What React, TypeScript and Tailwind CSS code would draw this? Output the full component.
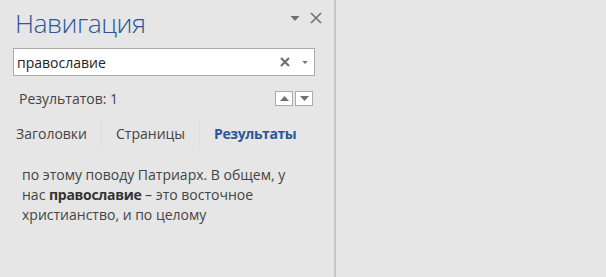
import React from "react";

const font = { fontFamily: '"Open Sans", "Noto Sans", sans-serif' };

function Triangle({ up = false, className = "" }: { up?: boolean; className?: string }) {
  return (
    <svg width="9" height="5" viewBox="0 0 9 5" className={className}>
      <path d={up ? "M0 5 L4.5 0 L9 5 Z" : "M0 0 L9 0 L4.5 5 Z"} fill="currentColor" />
    </svg>
  );
}

export default function App() {
  return (
    <div
      className="flex h-[277px] w-[606px] bg-[#e6e6e6] text-[#444444]"
      style={font}
    >
      <div className="flex w-[336px] shrink-0 flex-col border-r-2 border-[#c6c6c6]">
        {/* Header */}
        <div className="flex h-[48px] items-start justify-between pl-[15px] pr-[12px]">
          <h1 className="pt-[5px] text-[26.5px] font-light leading-[36px] tracking-[-0.5px] text-[#2b579a]">
            Навигация
          </h1>
          <div className="flex items-center gap-[10px] pt-[12px] text-[#707070]">
            <Triangle className="h-[5px] w-[10px]" />
            <svg width="12" height="12" viewBox="0 0 12 12">
              <path d="M1 1 L11 11 M11 1 L1 11" stroke="currentColor" strokeWidth="1.6" />
            </svg>
          </div>
        </div>

        {/* Search */}
        <div className="mx-[13px] flex h-[28px] w-[302px] items-center border border-[#ababab] bg-white pl-[3px] pr-[6px]">
          <span className="flex-1 text-[14px] text-[#222222]">православие</span>
          <svg width="10" height="10" viewBox="0 0 10 10" className="mr-[12px] text-[#707070]">
            <path d="M1 1 L9 9 M9 1 L1 9" stroke="currentColor" strokeWidth="2.2" />
          </svg>
          <Triangle className="h-[3px] w-[6px] text-[#707070]" />
        </div>

        {/* Results count */}
        <div className="mt-[13px] flex h-[18px] items-center justify-between pl-[19px] pr-[21px]">
          <span className="text-[14px] text-[#444444]">Результатов: 1</span>
          <div className="flex gap-[2px]">
            <button className="flex h-[15px] w-[18px] items-center justify-center border border-[#ababab] bg-white text-[#707070]">
              <Triangle up className="h-[5px] w-[9px]" />
            </button>
            <button className="flex h-[15px] w-[18px] items-center justify-center border border-[#ababab] bg-white text-[#707070]">
              <Triangle className="h-[5px] w-[9px]" />
            </button>
          </div>
        </div>

        {/* Tabs */}
        <div className="mt-[12px] flex h-[28px] items-center pl-[16px] text-[14px]">
          <span className="text-[#444444]">Заголовки</span>
          <span className="mx-[14px] h-[28px] w-px bg-[#dcdcdc]" />
          <span className="text-[#444444]">Страницы</span>
          <span className="mx-[14px] h-[28px] w-px bg-[#dcdcdc]" />
          <span className="font-bold tracking-[-0.4px] text-[#2b579a]">Результаты</span>
        </div>

        {/* Result */}
        <p className="mt-[18px] w-[290px] pl-[22px] text-[14px] leading-[20px] text-[#444444]">
          по этому поводу Патриарх. В общем, у нас{" "}
          <b className="font-bold tracking-[-0.3px] text-[#333333]">православие</b> – это восточное христианство, и по
          целому
        </p>
      </div>
      <div className="flex-1" />
    </div>
  );
}
